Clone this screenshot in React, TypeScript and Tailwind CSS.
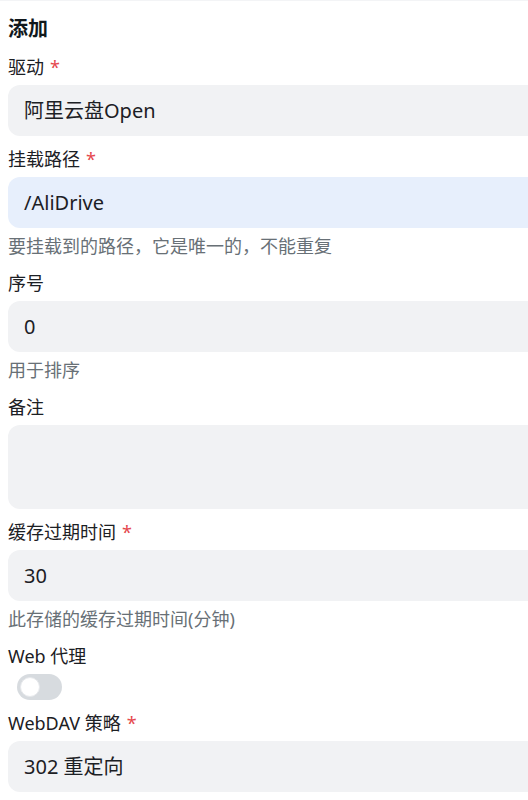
const font = { fontFamily: '"Noto Sans", "Noto Sans CJK SC", sans-serif' }

function Label({ text, required }: { text: string; required?: boolean }) {
  return (
    <div className="text-[18px] leading-[27px] text-[#1c2024] mb-1">
      {text}
      {required && <span className="text-[#e5484d] ml-[6px]">*</span>}
    </div>
  )
}

function Input({ value, focused }: { value: string; focused?: boolean }) {
  return (
    <div
      className={`h-[51px] rounded-[12px] pl-4 flex items-center text-[20px] text-[#1c2024] ${
        focused ? 'bg-[#e7effc]' : 'bg-[#f1f2f4]'
      }`}
    >
      {value}
    </div>
  )
}

function Help({ text }: { text: string }) {
  return <div className="text-[18px] leading-[27px] text-[#687076] mt-[5px]">{text}</div>
}

export default function App() {
  return (
    <div className="w-[528px] h-[800px] overflow-hidden bg-white border-t border-[#f3f4f6]" style={font}>
      <div className="w-[640px] pl-2 pt-[13px] flex flex-col gap-[10px]">
        <h1 className="text-[20px] leading-[30px] font-bold text-[#11181c]">添加</h1>
        <div>
          <Label text="驱动" required />
          <Input value="阿里云盘Open" />
        </div>
        <div>
          <Label text="挂载路径" required />
          <Input value="/AliDrive" focused />
          <Help text="要挂载到的路径，它是唯一的，不能重复" />
        </div>
        <div>
          <Label text="序号" />
          <Input value="0" />
          <Help text="用于排序" />
        </div>
        <div>
          <Label text="备注" />
          <div className="h-[84px] rounded-[12px] bg-[#f1f2f4]" />
        </div>
        <div>
          <Label text="缓存过期时间" required />
          <Input value="30" />
          <Help text="此存储的缓存过期时间(分钟)" />
        </div>
        <div>
          <Label text="Web 代理" />
          <div className="ml-[9px] w-[45px] h-[26px] rounded-full bg-[#d7dbdf] flex items-center px-[3px]">
            <div className="w-[20px] h-[20px] rounded-full bg-white border border-[#e6e8eb]" />
          </div>
        </div>
        <div>
          <Label text="WebDAV 策略" required />
          <Input value="302 重定向" />
        </div>
      </div>
    </div>
  )
}
